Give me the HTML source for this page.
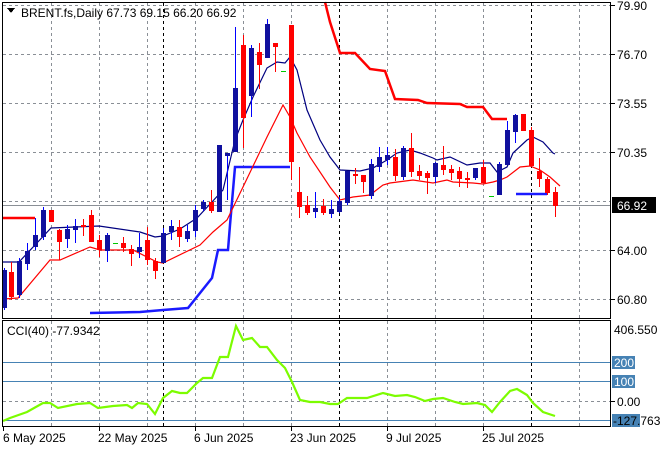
<!DOCTYPE html>
<html><head><meta charset="utf-8"><style>
html,body{margin:0;padding:0;background:#fff;width:660px;height:450px;overflow:hidden}
svg{display:block;font-family:"Liberation Sans",sans-serif;font-size:12px}
</style></head><body>
<svg width="660" height="450" viewBox="0 0 660 450" xmlns="http://www.w3.org/2000/svg" shape-rendering="crispEdges">
<rect width="660" height="450" fill="#fff"/>
<!-- grid -->
<g stroke="#8a8f96" stroke-dasharray="3,3" stroke-width="1">
<path d="M51.5 3V318M99.5 3V318M147.5 3V318M195.5 3V318M243.5 3V318M291.5 3V318M387.5 3V318M435.5 3V318M483.5 3V318M579.5 3V318"/>
<path d="M51.5 321V426M99.5 321V426M147.5 321V426M195.5 321V426M243.5 321V426M291.5 321V426M387.5 321V426M435.5 321V426M483.5 321V426M579.5 321V426"/>
<path d="M3 5.5H610M3 54.5H610M3 103.5H610M3 152.5H610M3 201.5H610M3 250.5H610M3 299.5H610"/>
<path d="M3 401.5H610"/>
</g>
<g stroke="#000" stroke-dasharray="3,3">
<path d="M163.5 3V318M339.5 3V318M531.5 3V318M163.5 321V426M339.5 321V426M531.5 321V426"/>
</g>
<line x1="3" y1="205.5" x2="610" y2="205.5" stroke="#8a8f96"/>
<!-- CCI levels -->
<g stroke="#4682b4">
<path d="M3 362.5H610M3 381.5H610M3 420.5H610"/>
</g>
<!-- channel lines -->
<g fill="none" shape-rendering="auto">
<polyline stroke="#ff0000" stroke-width="2.5" points="3,218 35,218"/>
<polyline stroke="#ff0000" stroke-width="2.5" points="325,2 330,22 340,53 355,53 370,69 385,71 395,99 418,100 427,103 460,104 467,107 483,107 492,119 507,119"/>
<polyline stroke="#1a1aff" stroke-width="2.5" points="90,313 140,312 163,310 188,308 212,278 218,250 228,250 230,225 235,167 290,167"/>
<polyline stroke="#1a1aff" stroke-width="2.5" points="516,194 547,194"/>
<polyline stroke="#000080" stroke-width="1.2" points="3,262 19,262 35,245 51,228 99,226 140,232 155,237 163,236 180,229 197,218 211,203 223,190 235,140 243,120 253,97 267,68 277,62 285,63 290,57 297,70 307,110 320,140 330,157 340,170 360,171 373,168 387,160 397,153 410,150 420,153 433,158 437,160 450,157 467,165 480,163 490,163 497,172 507,167 513,153 527,140 533,137 543,142 553,153 555,154"/>
<polyline stroke="#ff0000" stroke-width="1.2" points="3,299 18,298 50,260 60,260 90,247 100,250 133,250 157,262 163,263 200,245 213,232 227,220 243,187 267,137 283,105 290,117 297,133 310,157 330,187 340,200 353,197 370,195 383,185 390,183 413,180 433,183 447,180 453,182 473,183 483,184 493,182 500,180 507,177 520,167 530,166 540,170 550,177 560,186"/>
<polyline stroke="#7cfc00" stroke-width="2.2" points="3,421 10,418 27,412 43,403 50,403 58,408 77,404 90,403 98,408 113,406 127,405 132,408 138,403 147,404 155,414 163,398 172,391 180,393 187,393 197,383 203,378 212,378 220,357 228,357 236,326 243,340 252,338 260,347 267,347 277,360 285,368 292,382 300,400 310,402 320,402 330,404 338,404 347,398 367,398 383,393 395,396 407,395 415,397 425,401 433,399 443,398 455,402 463,404 477,403 485,405 492,412 500,402 510,391 517,389 527,395 533,403 543,412 555,416"/>
</g>
<!-- candles -->
<g id="c">
<g stroke="#0000ff"><path d="M4.5 268V310M19.5 258V298M27.5 243V270M35.5 218V250M43.5 207V240M67.5 225V248M75.5 219V243M107.5 233V262M139.5 233V258M163.5 228V263M171.5 220V240M187.5 225V242M195.5 205V237M203.5 200V211M219.5 145V212M227.5 153V200M235.5 27V152M251.5 45V117M267.5 19V58M315.5 192V218M331.5 200V218M339.5 197V213M347.5 171V205M371.5 159V199M379.5 147V172M387.5 147V165M403.5 146V180M435.5 162V183M475.5 168V180M499.5 162V195M507.5 121V165M515.5 114V143"/></g>
<g stroke="#ff0000"><path d="M11.5 262V300M51.5 210V222M59.5 229V260M83.5 219V236M91.5 210V242M99.5 235V257M123.5 237V252M131.5 245V266M147.5 227V265M155.5 258V279M179.5 220V247M211.5 190V213M243.5 35V148M259.5 43V89M275.5 43V72M291.5 25V180M299.5 167V218M307.5 196V215M323.5 199V215M355.5 168V184M363.5 175V193M395.5 149V181M411.5 133V177M419.5 165V180M427.5 171V194M443.5 146V175M451.5 165V180M459.5 167V187M467.5 172V188M483.5 160V183M523.5 114V131M531.5 127V166M539.5 158V187M547.5 177V195M555.5 187V217"/></g>
<g fill="#10109e">
<rect x="2" y="270" width="5" height="38"/><rect x="17" y="261" width="5" height="34"/><rect x="25" y="251" width="5" height="13"/><rect x="33" y="235" width="5" height="12"/><rect x="41" y="210" width="5" height="27"/><rect x="65" y="229" width="5" height="10"/><rect x="73" y="226" width="5" height="4"/><rect x="105" y="235" width="5" height="16"/><rect x="137" y="247" width="5" height="5"/><rect x="161" y="233" width="5" height="30"/><rect x="169" y="226" width="5" height="6"/><rect x="185" y="231" width="5" height="8"/><rect x="193" y="210" width="5" height="21"/><rect x="201" y="202" width="5" height="7"/><rect x="217" y="145" width="5" height="67"/><rect x="225" y="153" width="5" height="3"/><rect x="233" y="88" width="5" height="64"/><rect x="249" y="48" width="5" height="48"/><rect x="265" y="24" width="5" height="34"/><rect x="313" y="208" width="5" height="4"/><rect x="329" y="209" width="5" height="5"/><rect x="337" y="201" width="5" height="11"/><rect x="345" y="171" width="5" height="32"/><rect x="369" y="164" width="5" height="32"/><rect x="377" y="157" width="5" height="10"/><rect x="385" y="155" width="5" height="5"/><rect x="401" y="148" width="5" height="29"/><rect x="433" y="163" width="5" height="14"/><rect x="473" y="168" width="5" height="10"/><rect x="497" y="164" width="5" height="31"/><rect x="505" y="130" width="5" height="35"/><rect x="513" y="115" width="5" height="17"/>
</g>
<g fill="#ff0000">
<rect x="9" y="272" width="5" height="25"/><rect x="49" y="210" width="5" height="12"/><rect x="57" y="230" width="5" height="12"/><rect x="81" y="225" width="5" height="2"/><rect x="89" y="215" width="5" height="27"/><rect x="97" y="240" width="5" height="10"/><rect x="121" y="243" width="5" height="5"/><rect x="129" y="249" width="5" height="5"/><rect x="145" y="240" width="5" height="20"/><rect x="153" y="261" width="5" height="10"/><rect x="177" y="227" width="5" height="10"/><rect x="209" y="202" width="5" height="9"/><rect x="241" y="45" width="5" height="73"/><rect x="257" y="52" width="5" height="13"/><rect x="273" y="43" width="5" height="4"/><rect x="289" y="25" width="5" height="137"/><rect x="297" y="192" width="5" height="15"/><rect x="305" y="205" width="5" height="8"/><rect x="321" y="206" width="5" height="7"/><rect x="353" y="174" width="5" height="2"/><rect x="361" y="175" width="5" height="7"/><rect x="393" y="157" width="5" height="19"/><rect x="409" y="148" width="5" height="24"/><rect x="417" y="171" width="5" height="5"/><rect x="425" y="173" width="5" height="5"/><rect x="441" y="165" width="5" height="5"/><rect x="449" y="169" width="5" height="4"/><rect x="457" y="171" width="5" height="8"/><rect x="465" y="178" width="5" height="2"/><rect x="481" y="167" width="5" height="16"/><rect x="521" y="114" width="5" height="17"/><rect x="529" y="130" width="5" height="36"/><rect x="537" y="171" width="5" height="8"/><rect x="545" y="179" width="5" height="14"/><rect x="553" y="192" width="5" height="14"/>
</g>
<g fill="#00c800"><rect x="113" y="243" width="5" height="1"/><rect x="281" y="71" width="5" height="1"/><rect x="489" y="196" width="5" height="1"/></g>
</g>
<!-- borders -->
<g stroke="#000" fill="none">
<rect x="2.5" y="2.5" width="608" height="316"/>
<rect x="2.5" y="320.5" width="608" height="106"/>
</g>
<!-- ticks -->
<g stroke="#000"><path d="M3.5 427V431M99.5 427V431M195.5 427V431M291.5 427V431M387.5 427V431M483.5 427V431M611 5.5H615M611 54.5H615M611 103.5H615M611 152.5H615M611 250.5H615M611 299.5H615M611 401.5H615"/></g>
<!-- header -->
<path d="M7 8h8l-4 5z" fill="#000"/>
<text x="21" y="17" fill="#000" font-size="12">BRENT.fs,Daily  67.73 69.15 66.20 66.92</text>
<text x="7" y="335" fill="#000" font-size="12">CCI(40) -77.9342</text>
<!-- price labels -->
<g fill="#000" font-size="12">
<text x="617" y="10">79.90</text>
<text x="617" y="59">76.70</text>
<text x="617" y="108">73.55</text>
<text x="617" y="157">70.35</text>
<text x="617" y="255">64.00</text>
<text x="617" y="304">60.80</text>
<text x="614" y="334">406.550</text>
<text x="617" y="406">0.00</text>
</g>
<rect x="612" y="197" width="44" height="16" fill="#000"/>
<text x="617" y="210" fill="#fff" font-size="12">66.92</text>
<rect x="612" y="356" width="23" height="13" fill="#4682b4"/>
<text x="614" y="367" fill="#fff" font-size="12">200</text>
<rect x="612" y="375" width="23" height="13" fill="#4682b4"/>
<text x="614" y="386" fill="#fff" font-size="12">100</text>
<rect x="612" y="414" width="28" height="13" fill="#4682b4"/>
<text x="613" y="425" fill="#000" font-size="12">-127.763</text>
<!-- dates -->
<g fill="#000" font-size="12">
<text x="3" y="442">6 May 2025</text>
<text x="98" y="442">22 May 2025</text>
<text x="194" y="442">6 Jun 2025</text>
<text x="290" y="442">23 Jun 2025</text>
<text x="386" y="442">9 Jul 2025</text>
<text x="482" y="442">25 Jul 2025</text>
</g>
</svg>
</body></html>
